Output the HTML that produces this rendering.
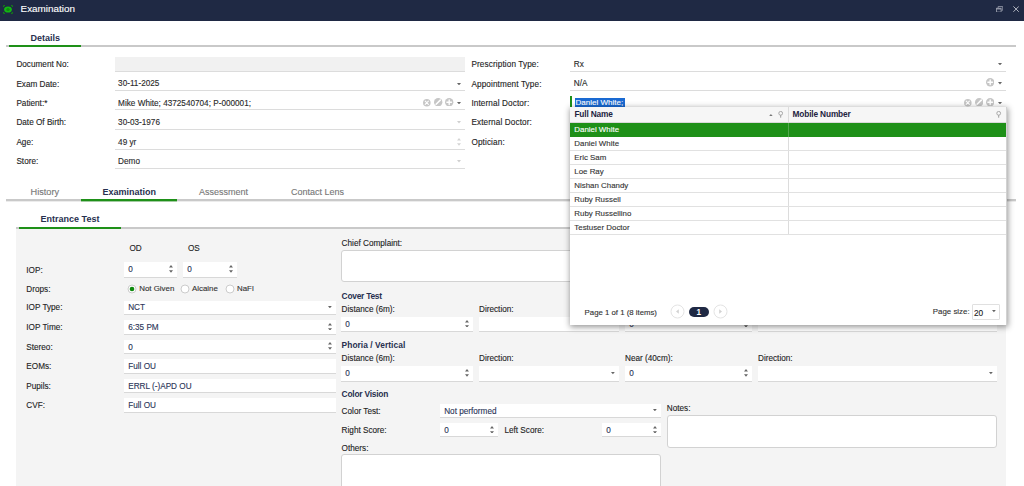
<!DOCTYPE html>
<html><head><meta charset="utf-8"><title>Examination</title><style>
html,body{margin:0;padding:0}
body{width:1024px;height:486px;overflow:hidden;background:#fff;position:relative;font-family:"Liberation Sans",sans-serif;font-size:8.2px;color:#2a2a2a}
.b{position:absolute;display:block}
.t{position:absolute;white-space:pre;line-height:12px;-webkit-text-stroke:0.12px currentColor}
.bold{font-weight:700;-webkit-text-stroke:0}
.navy{color:#27304f}
.lab{color:#1e1e1e}
.lab2{color:#333}
.val{color:#2a2a2a}
.val2{color:#2b3558}
.inp{background:#fff;border-bottom:1px solid #d8d8d8;box-sizing:border-box}
.ta{background:#fff;border:1px solid #d2d2d2;border-radius:3px;box-sizing:border-box}
.popup{background:#fff;box-shadow:0 1px 6px 0.5px rgba(0,0,0,0.42);overflow:hidden}
</style></head><body>
<div class="b " style="left:0px;top:0px;width:1024px;height:21px;background:#1f2944"></div>
<svg class="b" style="left:3.4px;top:4.5px" width="10" height="9" viewBox="0 0 10 9"><path d="M0.6 2V0.6H2M8 0.6H9.4V2M9.4 7V8.4H8M2 8.4H0.6V7" fill="none" stroke="#138a13" stroke-width="1"/><ellipse cx="5" cy="4.5" rx="3.9" ry="3.1" fill="#14b414"/><ellipse cx="5" cy="4.5" rx="1.7" ry="1.6" fill="#0e8a0e"/></svg>
<div class="t " style="left:20.6px;top:3px;font-size:9.9px;color:#fff">Examination</div>
<svg class="b" style="left:996px;top:5.6px" width="7.4" height="6.8" viewBox="0 0 7.4 6.8"><path d="M2.1 2.1V0.6H6.8V4.2H5.2" fill="none" stroke="#9499a8" stroke-width="0.9"/><rect x="0.5" y="2.3" width="4.6" height="3.8" fill="none" stroke="#9499a8" stroke-width="0.9"/><path d="M0.5 2.8H5.1" stroke="#9499a8" stroke-width="1.3"/></svg>
<svg class="b" style="left:1013px;top:6.4px" width="6.2" height="6.2" viewBox="0 0 6.2 6.2"><path d="M0.4 0.4L5.8 5.8M5.8 0.4L0.4 5.8" stroke="#c3c6cf" stroke-width="0.9"/></svg>
<div class="t bold navy" style="left:30.5px;top:32px;font-size:9px;">Details</div>
<div class="b " style="left:6px;top:45px;width:1010px;height:2px;background:#c9c9c9"></div>
<div class="b " style="left:9px;top:45px;width:72px;height:2px;background:#1e9018"></div>
<div class="b " style="left:114.5px;top:57px;width:350.5px;height:14px;background:#f1f1f1"></div>
<div class="t lab" style="left:16.4px;top:59px;font-size:8.2px;">Document No:</div>
<div class="b " style="left:114.5px;top:71px;width:350.5px;height:1px;background:#dcdcdc"></div>
<div class="t lab" style="left:16.4px;top:79px;font-size:8.2px;">Exam Date:</div>
<div class="t val" style="left:118.1px;top:78px;font-size:8.2px;">30-11-2025</div>
<div class="b " style="left:114.5px;top:90px;width:350.5px;height:1px;background:#dcdcdc"></div>
<div class="t lab" style="left:16.4px;top:98px;font-size:8.2px;">Patient:*</div>
<div class="t val" style="left:118.1px;top:98px;font-size:8.2px;">Mike White; 4372540704; P-000001;</div>
<div class="b " style="left:114.5px;top:109px;width:350.5px;height:1px;background:#dcdcdc"></div>
<div class="t lab" style="left:16.4px;top:117px;font-size:8.2px;">Date Of Birth:</div>
<div class="t val" style="left:118.1px;top:117px;font-size:8.2px;">30-03-1976</div>
<div class="b " style="left:114.5px;top:129px;width:350.5px;height:1px;background:#dcdcdc"></div>
<div class="t lab" style="left:16.4px;top:137px;font-size:8.2px;">Age:</div>
<div class="t val" style="left:118.1px;top:137px;font-size:8.2px;">49 yr</div>
<div class="b " style="left:114.5px;top:149px;width:350.5px;height:1px;background:#dcdcdc"></div>
<div class="t lab" style="left:16.4px;top:156px;font-size:8.2px;">Store:</div>
<div class="t val" style="left:118.1px;top:156px;font-size:8.2px;">Demo</div>
<div class="b " style="left:114.5px;top:168px;width:350.5px;height:1px;background:#dcdcdc"></div>
<svg class="b" style="left:457.25px;top:82.55px" width="4.0" height="2.4" viewBox="0 0 4.0 2.4"><path d="M0 0H4.0L2.0 2.4Z" fill="#666"/></svg>
<svg class="b" style="left:423.45px;top:99.00px" width="7.6" height="7.6" viewBox="-3.8 -3.8 7.6 7.6"><circle r="3.8" fill="#c6c6c6"/><path d="M-1.5959999999999999 -1.5959999999999999L1.5959999999999999 1.5959999999999999M-1.5959999999999999 1.5959999999999999L1.5959999999999999 -1.5959999999999999" stroke="#fff" stroke-width="1.1" stroke-linecap="round"/></svg>
<svg class="b" style="left:434.20px;top:97.90px" width="8.4" height="8.4" viewBox="-4.2 -4.2 8.4 8.4"><circle r="4.2" fill="#c6c6c6"/><path d="M-2.1 2.1L2.1 -2.1" stroke="#fff" stroke-width="1.5" stroke-linecap="round"/></svg>
<svg class="b" style="left:445.20px;top:97.90px" width="8.4" height="8.4" viewBox="-4.2 -4.2 8.4 8.4"><circle r="4.2" fill="#c6c6c6"/><path d="M-2.3100000000000005 0H2.3100000000000005M0 -2.3100000000000005V2.3100000000000005" stroke="#fff" stroke-width="1.4" stroke-linecap="round"/></svg>
<svg class="b" style="left:457.25px;top:102.00px" width="4.0" height="2.4" viewBox="0 0 4.0 2.4"><path d="M0 0H4.0L2.0 2.4Z" fill="#666"/></svg>
<svg class="b" style="left:457.25px;top:121.45px" width="4.0" height="2.4" viewBox="0 0 4.0 2.4"><path d="M0 0H4.0L2.0 2.4Z" fill="#cfcfcf"/></svg>
<svg class="b" style="left:457.25px;top:137.95px" width="4.0" height="7.7" viewBox="0 0 4.0 7.7"><path d="M0 2.5H4.0L2.0 0Z M0 5.2H4.0L2.0 7.7Z" fill="#d4d4d4"/></svg>
<svg class="b" style="left:457.25px;top:160.35px" width="4.0" height="2.4" viewBox="0 0 4.0 2.4"><path d="M0 0H4.0L2.0 2.4Z" fill="#cfcfcf"/></svg>
<div class="t lab" style="left:471.4px;top:59px;font-size:8.2px;letter-spacing:0.12px">Prescription Type:</div>
<div class="t val" style="left:573.8px;top:59px;font-size:8.2px;">Rx</div>
<div class="b " style="left:570.4px;top:71px;width:435.6px;height:1px;background:#dcdcdc"></div>
<div class="t lab" style="left:471.4px;top:79px;font-size:8.2px;letter-spacing:0.12px">Appointment Type:</div>
<div class="t val" style="left:573.8px;top:78px;font-size:8.2px;">N/A</div>
<div class="b " style="left:570.4px;top:90px;width:435.6px;height:1px;background:#dcdcdc"></div>
<div class="t lab" style="left:471.4px;top:98px;font-size:8.2px;letter-spacing:0.12px">Internal Doctor:</div>
<div class="b " style="left:570.4px;top:109px;width:435.6px;height:1px;background:#dcdcdc"></div>
<div class="t lab" style="left:471.4px;top:117px;font-size:8.2px;letter-spacing:0.12px">External Doctor:</div>
<div class="t lab" style="left:471.4px;top:137px;font-size:8.2px;letter-spacing:0.12px">Optician:</div>
<svg class="b" style="left:998.00px;top:62.90px" width="4.0" height="2.4" viewBox="0 0 4.0 2.4"><path d="M0 0H4.0L2.0 2.4Z" fill="#666"/></svg>
<svg class="b" style="left:985.80px;top:78.45px" width="8.4" height="8.4" viewBox="-4.2 -4.2 8.4 8.4"><circle r="4.2" fill="#c6c6c6"/><path d="M-2.3100000000000005 0H2.3100000000000005M0 -2.3100000000000005V2.3100000000000005" stroke="#fff" stroke-width="1.4" stroke-linecap="round"/></svg>
<svg class="b" style="left:998.00px;top:82.35px" width="4.0" height="2.4" viewBox="0 0 4.0 2.4"><path d="M0 0H4.0L2.0 2.4Z" fill="#666"/></svg>
<svg class="b" style="left:964.20px;top:99.00px" width="7.6" height="7.6" viewBox="-3.8 -3.8 7.6 7.6"><circle r="3.8" fill="#c6c6c6"/><path d="M-1.5959999999999999 -1.5959999999999999L1.5959999999999999 1.5959999999999999M-1.5959999999999999 1.5959999999999999L1.5959999999999999 -1.5959999999999999" stroke="#fff" stroke-width="1.1" stroke-linecap="round"/></svg>
<svg class="b" style="left:975.00px;top:97.90px" width="8.4" height="8.4" viewBox="-4.2 -4.2 8.4 8.4"><circle r="4.2" fill="#c6c6c6"/><path d="M-2.1 2.1L2.1 -2.1" stroke="#fff" stroke-width="1.5" stroke-linecap="round"/></svg>
<svg class="b" style="left:985.80px;top:97.90px" width="8.4" height="8.4" viewBox="-4.2 -4.2 8.4 8.4"><circle r="4.2" fill="#c6c6c6"/><path d="M-2.3100000000000005 0H2.3100000000000005M0 -2.3100000000000005V2.3100000000000005" stroke="#fff" stroke-width="1.4" stroke-linecap="round"/></svg>
<svg class="b" style="left:998.00px;top:102.00px" width="4.0" height="2.4" viewBox="0 0 4.0 2.4"><path d="M0 0H4.0L2.0 2.4Z" fill="#666"/></svg>
<div class="b " style="left:570px;top:95.7px;width:2px;height:11px;background:#1e9018"></div>
<div class="b " style="left:575px;top:98px;width:50px;height:8.6px;background:#1a6ad2"></div>
<div class="t " style="left:575.6px;top:97px;font-size:8px;color:#fff">Daniel White;</div>
<div class="t " style="left:30.5px;top:186px;font-size:9.2px;color:#777">History</div>
<div class="t bold navy" style="left:102.6px;top:186px;font-size:9px;">Examination</div>
<div class="t " style="left:199px;top:186px;font-size:9px;color:#777">Assessment</div>
<div class="t " style="left:291px;top:186px;font-size:9px;color:#777">Contact Lens</div>
<div class="b " style="left:6px;top:199px;width:1010px;height:2px;background:#c9c9c9"></div>
<div class="b " style="left:81px;top:199px;width:96px;height:2px;background:#1e9018"></div>
<div class="b " style="left:6px;top:201px;width:1010px;height:1px;background:#c9c9c9;opacity:0.35"></div>
<div class="b " style="left:81px;top:201px;width:96px;height:1px;background:#1e9018;opacity:0.35"></div>
<div class="t bold navy" style="left:40.6px;top:213px;font-size:9px;">Entrance Test</div>
<div class="b " style="left:16px;top:227px;width:990px;height:2px;background:#c9c9c9"></div>
<div class="b " style="left:19px;top:227px;width:102px;height:2px;background:#1e9018"></div>
<div class="b " style="left:16px;top:229px;width:990px;height:257px;background:#f4f4f4"></div>
<div class="t lab" style="left:129.5px;top:243px;font-size:8.2px;">OD</div>
<div class="t lab" style="left:188px;top:243px;font-size:8.2px;">OS</div>
<div class="t lab" style="left:26.3px;top:265px;font-size:8.2px;">IOP:</div>
<div class="b inp" style="left:124px;top:262px;width:53px;height:16px;"></div>
<div class="t val2" style="left:128.2px;top:264px;font-size:8.2px;">0</div>
<svg class="b" style="left:169.00px;top:265.45px" width="4.0" height="7.7" viewBox="0 0 4.0 7.7"><path d="M0 2.5H4.0L2.0 0Z M0 5.2H4.0L2.0 7.7Z" fill="#666"/></svg>
<div class="b inp" style="left:183px;top:262px;width:54px;height:16px;"></div>
<div class="t val2" style="left:187.2px;top:264px;font-size:8.2px;">0</div>
<svg class="b" style="left:229.00px;top:265.45px" width="4.0" height="7.7" viewBox="0 0 4.0 7.7"><path d="M0 2.5H4.0L2.0 0Z M0 5.2H4.0L2.0 7.7Z" fill="#666"/></svg>
<div class="t lab" style="left:26.3px;top:284px;font-size:8.2px;">Drops:</div>
<svg class="b" style="left:126.6px;top:283.5px" width="10" height="10" viewBox="0 0 10 10"><circle cx="5" cy="5" r="4" fill="#fff" stroke="#c6c6c6" stroke-width="0.9"/><circle cx="5" cy="5" r="2.35" fill="#0f8a0f"/></svg>
<div class="t lab2" style="left:139.2px;top:283px;font-size:7.9px;">Not Given</div>
<svg class="b" style="left:180.1px;top:283.5px" width="10" height="10" viewBox="0 0 10 10"><circle cx="5" cy="5" r="4" fill="#fff" stroke="#c6c6c6" stroke-width="0.9"/></svg>
<div class="t lab2" style="left:192px;top:283px;font-size:7.9px;">Alcaine</div>
<svg class="b" style="left:224.6px;top:283.5px" width="10" height="10" viewBox="0 0 10 10"><circle cx="5" cy="5" r="4" fill="#fff" stroke="#c6c6c6" stroke-width="0.9"/></svg>
<div class="t lab2" style="left:237px;top:283px;font-size:7.9px;">NaFl</div>
<div class="t lab" style="left:26.3px;top:302px;font-size:8.2px;">IOP Type:</div>
<div class="b inp" style="left:124px;top:300.6px;width:211.5px;height:14.4px;"></div>
<div class="t val2" style="left:128.2px;top:302px;font-size:8.2px;">NCT</div>
<svg class="b" style="left:327.80px;top:306.05px" width="3.8" height="2.3" viewBox="0 0 3.8 2.3"><path d="M0 0H3.8L1.9 2.3Z" fill="#666"/></svg>
<div class="t lab" style="left:26.3px;top:322px;font-size:8.2px;">IOP Time:</div>
<div class="b inp" style="left:124px;top:320.15px;width:211.5px;height:14.4px;"></div>
<div class="t val2" style="left:128.2px;top:322px;font-size:8.2px;">6:35 PM</div>
<svg class="b" style="left:327.50px;top:322.80px" width="4.0" height="7.7" viewBox="0 0 4.0 7.7"><path d="M0 2.5H4.0L2.0 0Z M0 5.2H4.0L2.0 7.7Z" fill="#666"/></svg>
<div class="t lab" style="left:26.3px;top:342px;font-size:8.2px;">Stereo:</div>
<div class="b inp" style="left:124px;top:339.7px;width:211.5px;height:14.4px;"></div>
<div class="t val2" style="left:128.2px;top:342px;font-size:8.2px;">0</div>
<svg class="b" style="left:327.50px;top:342.35px" width="4.0" height="7.7" viewBox="0 0 4.0 7.7"><path d="M0 2.5H4.0L2.0 0Z M0 5.2H4.0L2.0 7.7Z" fill="#666"/></svg>
<div class="t lab" style="left:26.3px;top:361px;font-size:8.2px;">EOMs:</div>
<div class="b inp" style="left:124px;top:359.25px;width:211.5px;height:14.4px;"></div>
<div class="t val2" style="left:128.2px;top:361px;font-size:8.2px;">Full OU</div>
<div class="t lab" style="left:26.3px;top:381px;font-size:8.2px;">Pupils:</div>
<div class="b inp" style="left:124px;top:378.8px;width:211.5px;height:14.4px;"></div>
<div class="t val2" style="left:128.2px;top:381px;font-size:8.2px;">ERRL (-)APD OU</div>
<div class="t lab" style="left:26.3px;top:400px;font-size:8.2px;">CVF:</div>
<div class="b inp" style="left:124px;top:398.35px;width:211.5px;height:14.4px;"></div>
<div class="t val2" style="left:128.2px;top:400px;font-size:8.2px;">Full OU</div>
<div class="t lab" style="left:341.6px;top:238px;font-size:8.2px;">Chief Complaint:</div>
<div class="b ta" style="left:341px;top:250px;width:656px;height:32px;"></div>
<div class="t bold navy" style="left:341.6px;top:290px;font-size:8.4px;letter-spacing:-0.25px">Cover Test</div>
<div class="t lab" style="left:341.6px;top:304px;font-size:8.2px;">Distance (6m):</div>
<div class="t lab" style="left:479px;top:304px;font-size:8.2px;">Direction:</div>
<div class="t lab" style="left:625px;top:304px;font-size:8.2px;">Near (40cm):</div>
<div class="t lab" style="left:758px;top:304px;font-size:8.2px;">Direction:</div>
<div class="b inp" style="left:341px;top:316.6px;width:132px;height:15.4px;"></div>
<div class="t val2" style="left:345.2px;top:319px;font-size:8.2px;">0</div>
<svg class="b" style="left:465.00px;top:319.75px" width="4.0" height="7.7" viewBox="0 0 4.0 7.7"><path d="M0 2.5H4.0L2.0 0Z M0 5.2H4.0L2.0 7.7Z" fill="#666"/></svg>
<div class="b inp" style="left:479px;top:316.6px;width:140px;height:15.4px;"></div>
<svg class="b" style="left:611.30px;top:322.55px" width="3.8" height="2.3" viewBox="0 0 3.8 2.3"><path d="M0 0H3.8L1.9 2.3Z" fill="#666"/></svg>
<div class="b inp" style="left:625px;top:316.6px;width:127px;height:15.4px;"></div>
<div class="t val2" style="left:629.2px;top:319px;font-size:8.2px;">0</div>
<svg class="b" style="left:744.00px;top:319.75px" width="4.0" height="7.7" viewBox="0 0 4.0 7.7"><path d="M0 2.5H4.0L2.0 0Z M0 5.2H4.0L2.0 7.7Z" fill="#666"/></svg>
<div class="b inp" style="left:758px;top:316.6px;width:238.6px;height:15.4px;"></div>
<svg class="b" style="left:988.90px;top:322.55px" width="3.8" height="2.3" viewBox="0 0 3.8 2.3"><path d="M0 0H3.8L1.9 2.3Z" fill="#666"/></svg>
<div class="t bold navy" style="left:341.6px;top:339px;font-size:8.4px;letter-spacing:0.05px">Phoria / Vertical</div>
<div class="t lab" style="left:341.6px;top:353px;font-size:8.2px;">Distance (6m):</div>
<div class="t lab" style="left:479px;top:353px;font-size:8.2px;">Direction:</div>
<div class="t lab" style="left:625px;top:353px;font-size:8.2px;">Near (40cm):</div>
<div class="t lab" style="left:758px;top:353px;font-size:8.2px;">Direction:</div>
<div class="b inp" style="left:341px;top:366px;width:132px;height:16px;"></div>
<div class="t val2" style="left:345.2px;top:368px;font-size:8.2px;">0</div>
<svg class="b" style="left:465.00px;top:369.45px" width="4.0" height="7.7" viewBox="0 0 4.0 7.7"><path d="M0 2.5H4.0L2.0 0Z M0 5.2H4.0L2.0 7.7Z" fill="#666"/></svg>
<div class="b inp" style="left:479px;top:366px;width:140px;height:16px;"></div>
<svg class="b" style="left:611.30px;top:372.25px" width="3.8" height="2.3" viewBox="0 0 3.8 2.3"><path d="M0 0H3.8L1.9 2.3Z" fill="#666"/></svg>
<div class="b inp" style="left:625px;top:366px;width:127px;height:16px;"></div>
<div class="t val2" style="left:629.2px;top:368px;font-size:8.2px;">0</div>
<svg class="b" style="left:744.00px;top:369.45px" width="4.0" height="7.7" viewBox="0 0 4.0 7.7"><path d="M0 2.5H4.0L2.0 0Z M0 5.2H4.0L2.0 7.7Z" fill="#666"/></svg>
<div class="b inp" style="left:758px;top:366px;width:238.6px;height:16px;"></div>
<svg class="b" style="left:988.90px;top:372.25px" width="3.8" height="2.3" viewBox="0 0 3.8 2.3"><path d="M0 0H3.8L1.9 2.3Z" fill="#666"/></svg>
<div class="t bold navy" style="left:341.6px;top:388px;font-size:8.4px;letter-spacing:-0.22px">Color Vision</div>
<div class="t lab" style="left:341.6px;top:406px;font-size:8.2px;">Color Test:</div>
<div class="b inp" style="left:440px;top:403.6px;width:220.7px;height:14px;"></div>
<div class="t val2" style="left:444.2px;top:406px;font-size:8.2px;">Not performed</div>
<svg class="b" style="left:653.00px;top:408.85px" width="3.8" height="2.3" viewBox="0 0 3.8 2.3"><path d="M0 0H3.8L1.9 2.3Z" fill="#666"/></svg>
<div class="t lab" style="left:341.6px;top:425px;font-size:8.2px;">Right Score:</div>
<div class="b inp" style="left:440px;top:423px;width:58px;height:14.4px;"></div>
<div class="t val2" style="left:444.2px;top:425px;font-size:8.2px;">0</div>
<svg class="b" style="left:490.00px;top:425.65px" width="4.0" height="7.7" viewBox="0 0 4.0 7.7"><path d="M0 2.5H4.0L2.0 0Z M0 5.2H4.0L2.0 7.7Z" fill="#666"/></svg>
<div class="t lab" style="left:504.4px;top:425px;font-size:8.2px;">Left Score:</div>
<div class="b inp" style="left:602px;top:423px;width:58.7px;height:14.4px;"></div>
<div class="t val2" style="left:606.2px;top:425px;font-size:8.2px;">0</div>
<svg class="b" style="left:652.70px;top:425.65px" width="4.0" height="7.7" viewBox="0 0 4.0 7.7"><path d="M0 2.5H4.0L2.0 0Z M0 5.2H4.0L2.0 7.7Z" fill="#666"/></svg>
<div class="t lab" style="left:341.6px;top:443px;font-size:8.2px;">Others:</div>
<div class="b ta" style="left:341px;top:454px;width:319.7px;height:40px;"></div>
<div class="t lab" style="left:666.8px;top:403px;font-size:8.2px;">Notes:</div>
<div class="b ta" style="left:667px;top:415px;width:330px;height:33px;"></div>
<div class="b popup" style="left:570px;top:106.6px;width:437.4px;height:218.3px">
<div class="b" style="left:0;top:0;width:437.4px;height:16.2px;background:#f6f6f6;border-bottom:1px solid #d9d9d9;box-sizing:border-box"></div>
<div class="b" style="left:0;top:16.2px;width:437.4px;height:13.8px;background:#1e9018"></div>
<div class="b" style="left:218px;top:0;width:1px;height:127.69999999999999px;background:#dcdcdc"></div>
<div class="b" style="left:218px;top:16.2px;width:1px;height:13.8px;background:#52a84d"></div>
<div class="b" style="left:0;top:43.6px;width:437.4px;height:1px;background:#e1e1e1"></div>
<div class="b" style="left:0;top:57.6px;width:437.4px;height:1px;background:#e1e1e1"></div>
<div class="b" style="left:0;top:71.6px;width:437.4px;height:1px;background:#e1e1e1"></div>
<div class="b" style="left:0;top:85.6px;width:437.4px;height:1px;background:#e1e1e1"></div>
<div class="b" style="left:0;top:99.6px;width:437.4px;height:1px;background:#e1e1e1"></div>
<div class="b" style="left:0;top:113.6px;width:437.4px;height:1px;background:#e1e1e1"></div>
<div class="b" style="left:0;top:127.6px;width:437.4px;height:1px;background:#e1e1e1"></div>
<div class="b" style="right:0;top:0;width:1px;height:218.3px;background:#d2d2d2"></div>
</div>
<div class="t bold" style="left:574.4px;top:108px;font-size:8.3px;letter-spacing:-0.15px;color:#1d2340">Full Name</div>
<div class="t bold" style="left:792.6px;top:108px;font-size:8.3px;letter-spacing:-0.15px;color:#1d2340">Mobile Number</div>
<div class="t " style="left:574.3px;top:124px;font-size:7.9px;color:#fff">Daniel White</div>
<div class="t " style="left:574.3px;top:138px;font-size:7.9px;color:#333">Daniel White</div>
<div class="t " style="left:574.3px;top:152px;font-size:7.9px;color:#333">Eric Sam</div>
<div class="t " style="left:574.3px;top:166px;font-size:7.9px;color:#333">Loe Ray</div>
<div class="t " style="left:574.3px;top:180px;font-size:7.9px;color:#333">Nishan Chandy</div>
<div class="t " style="left:574.3px;top:194px;font-size:7.9px;color:#333">Ruby Russell</div>
<div class="t " style="left:574.3px;top:208px;font-size:7.9px;color:#333">Ruby Russellino</div>
<div class="t " style="left:574.3px;top:222px;font-size:7.9px;color:#333">Testuser Doctor</div>
<svg class="b" style="left:769.3px;top:113.9px" width="3.8" height="2.2" viewBox="0 0 3.8 2.2"><path d="M0 2.2H3.8L1.9 0Z" fill="#777"/></svg>
<svg class="b" style="left:777.7px;top:110.5px" width="5.4" height="7" viewBox="0 0 5.4 7"><circle cx="2.7" cy="2.3" r="1.9" fill="none" stroke="#9c9c9c" stroke-width="0.85"/><path d="M2.7 4.2V6.7" stroke="#9c9c9c" stroke-width="1"/></svg>
<svg class="b" style="left:996.2px;top:110.5px" width="5.4" height="7" viewBox="0 0 5.4 7"><circle cx="2.7" cy="2.3" r="1.9" fill="none" stroke="#9c9c9c" stroke-width="0.85"/><path d="M2.7 4.2V6.7" stroke="#9c9c9c" stroke-width="1"/></svg>
<div class="t " style="left:584.6px;top:307px;font-size:7.8px;color:#333">Page 1 of 1 (8 items)</div>
<svg class="b" style="left:670.3px;top:304.1px" width="15" height="15" viewBox="-7.5 -7.5 15 15"><circle r="6.5" fill="#fff" stroke="#e4e4e4" stroke-width="1"/><path d="M1.3 -2.3L-1.5 0L1.3 2.3Z" fill="#d2d2d2"/></svg>
<svg class="b" style="left:712.5px;top:303.9px" width="15" height="15" viewBox="-7.5 -7.5 15 15"><circle r="6.5" fill="#fff" stroke="#e4e4e4" stroke-width="1"/><path d="M-1.3 -2.3L1.5 0L-1.3 2.3Z" fill="#d2d2d2"/></svg>
<div class="b " style="left:688.8px;top:306.6px;width:19.8px;height:10.7px;background:#1f2944;border-radius:5.4px"></div>
<div class="t bold" style="left:696.6px;top:307px;font-size:8.2px;color:#fff">1</div>
<div class="t " style="left:932.8px;top:306px;font-size:7.9px;color:#333">Page size:</div>
<div class="b " style="left:971.5px;top:304px;width:28.2px;height:16px;background:#fff;border:1px solid #e0e0e0;box-sizing:border-box;border-radius:1px"></div>
<div class="t " style="left:973.9px;top:307px;font-size:8.3px;color:#222">20</div>
<svg class="b" style="left:992.40px;top:310.40px" width="3.8" height="2.2" viewBox="0 0 3.8 2.2"><path d="M0 0H3.8L1.9 2.2Z" fill="#666"/></svg>
</body></html>
